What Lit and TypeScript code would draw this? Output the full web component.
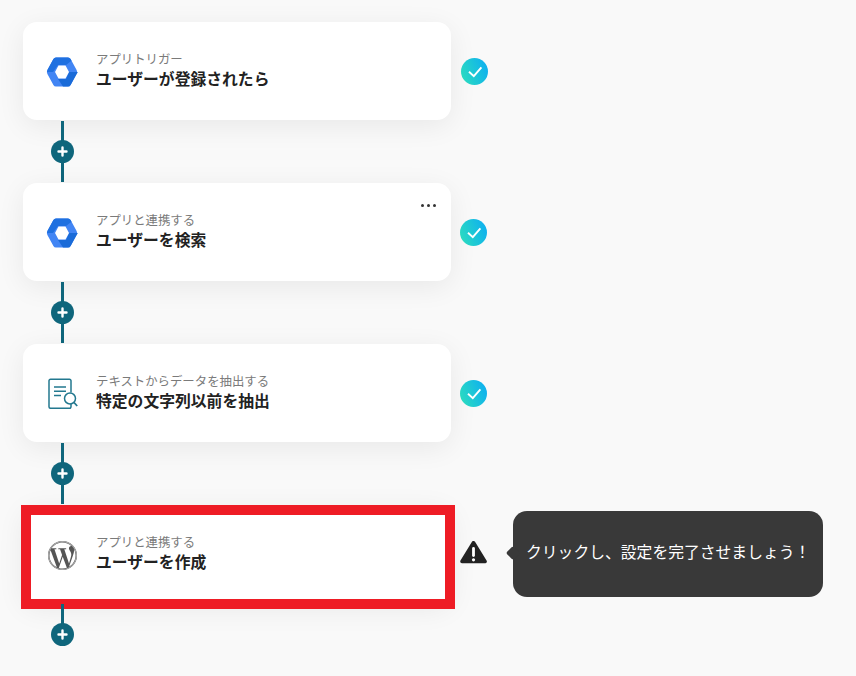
import { LitElement, html, css } from "lit";
import { customElement } from "lit/decorators.js";

const hex = html`<svg class="ico hex" viewBox="0 0 32 30" width="32" height="30">
  <path d="M10 .6h12a3 3 0 0 1 2.600 1.500l6 10.900a4 4 0 0 1 0 4l-6 10.900a3 3 0 0 1-2.600 1.500H10a3 3 0 0 1-2.600-1.500l-6-10.900a4 4 0 0 1 0-4l6-10.900A3 3 0 0 1 10 .6z" fill="#4285f4"/>
  <path d="M10 .6h12a3 3 0 0 1 2.600 1.500l.9 1.600L20 8h-8l-5 7H1l.4-2 6-10.900A3 3 0 0 1 10 .6z" fill="#1f70e0"/>
  <path d="M20 22l3-7 8.800 0a4 4 0 0 1-1.200 2l-6 10.900a3 3 0 0 1-2.600 1.500h-5L12 22z" fill="#1a6bd8"/>
  <path d="M12.500 8.500h7L23 15l-3.500 6.500h-7L9 15z" fill="#fff"/>
</svg>`;

const doc = html`<svg class="ico" viewBox="0 0 32 32" width="32" height="32" fill="none" stroke="#23788f" stroke-width="1.500">
  <path d="M25 15.500V3.800a1.500 1.500 0 0 0-1.500-1.500h-19A1.500 1.500 0 0 0 3 3.800v26a1.500 1.500 0 0 0 1.500 1.500h19a1.500 1.500 0 0 0 1.500-1.500v-2.800"/>
  <path d="M8 10h12M8 14.200h12M8 18.500h7"/>
  <circle cx="24" cy="21.500" r="5.500" fill="#fff"/>
  <path d="M28 25.500l3.200 3.500" stroke-width="1.800"/>
</svg>`;

const wp = html`<svg class="ico wp" viewBox="0 0 24 24" width="29" height="29">
  <path fill="#555" d="M21.469 6.825c.84 1.537 1.318 3.3 1.318 5.175 0 3.979-2.156 7.456-5.363 9.325l3.295-9.527c.615-1.54.82-2.771.82-3.864 0-.405-.026-.78-.07-1.11m-7.981.105c.647-.03 1.232-.105 1.232-.105.582-.075.514-.93-.067-.899 0 0-1.755.135-2.88.135-1.064 0-2.85-.15-2.85-.15-.585-.03-.661.855-.075.885 0 0 .54.061 1.125.09l1.68 4.605-2.37 7.08L5.354 6.9c.649-.03 1.234-.1 1.234-.1.585-.075.516-.93-.065-.896 0 0-1.746.138-2.874.138-.2 0-.438-.008-.69-.015C4.911 3.15 8.235 1.215 12 1.215c2.809 0 5.365 1.072 7.286 2.833-.046-.003-.091-.009-.141-.009-1.06 0-1.812.923-1.812 1.914 0 .89.513 1.643 1.06 2.531.411.72.89 1.643.89 2.977 0 .915-.354 1.994-.821 3.479l-1.075 3.585-3.9-11.61.001.014zM12 22.784c-1.059 0-2.081-.153-3.048-.437l3.237-9.406 3.315 9.087c.024.053.05.101.078.149-1.12.393-2.325.609-3.582.609M1.211 12c0-1.564.336-3.05.935-4.39L7.29 21.709C3.694 19.96 1.212 16.271 1.211 12M12 0C5.385 0 0 5.385 0 12s5.385 12 12 12 12-5.385 12-12S18.615 0 12 0"/>
  <circle cx="12" cy="12" r="11.500" fill="none" stroke="#a8a8a8" stroke-width="1"/>
</svg>`;

const check = html`<svg viewBox="0 0 27 27" width="27" height="27">
  <defs><linearGradient id="g" x1="0" y1=".7" x2="1" y2=".3"><stop offset="0" stop-color="#2bdbc0"/><stop offset="1" stop-color="#0eb0f0"/></linearGradient></defs>
  <circle cx="13.500" cy="13.500" r="13.500" fill="url(#g)"/>
  <path d="M8 13.800l4.800 4.400 7.600-8.800" fill="none" stroke="#fff" stroke-width="1.900"/>
</svg>`;

const warn = html`<svg viewBox="0 1 27 24" width="27" height="24">
  <path d="M13.500 2.800L25 21.500H2z" fill="#222" stroke="#222" stroke-width="3.600" stroke-linejoin="round"/>
  <path d="M13.500 8.500v7" stroke="#fff" stroke-width="2.800" stroke-linecap="round"/>
  <circle cx="13.500" cy="19.800" r="1.600" fill="#fff"/>
</svg>`;

const steps = [
  { icon: hex, label: "アプリトリガー", title: "ユーザーが登録されたら", st: "first" },
  { icon: hex, label: "アプリと連携する", title: "ユーザーを検索", st: "ok", menu: true },
  { icon: doc, label: "テキストからデータを抽出する", title: "特定の文字列以前を抽出", st: "ok" },
  { icon: wp, label: "アプリと連携する", title: "ユーザーを作成", st: "warn" },
];

@customElement("app-root")
export class AppRoot extends LitElement {
  static styles = css`
    :host {
      display: block;
      width: 856px;
      height: 676px;
      overflow: hidden;
      background: #f9f9f9;
      font-family: "Noto Sans CJK JP", "Noto Sans", sans-serif;
    }
    .flow { display: flex; flex-direction: column; padding: 22px 0 0 23px; }
    .row { display: flex; align-items: center; }
    .card {
      position: relative;
      box-sizing: border-box;
      width: 428px;
      height: 98px;
      background: #fff;
      border-radius: 14px;
      box-shadow: 0 6px 28px rgba(0, 0, 0, 0.07);
      display: flex;
      align-items: center;
      padding-left: 23px;
      gap: 18px;
    }
    .slot { width: 32px; height: 32px; display: flex; align-items: center; justify-content: center; flex: none; }
    .ico { display: block; flex: none; }
    .hex, .wp { margin-top: 2px; }
    .text { display: flex; flex-direction: column; margin-top: -2px; }
    .label { font-size: 12.4px; line-height: 18px; color: #7a7a7a; white-space: nowrap; }
    .title { font-size: 15.8px; line-height: 22px; font-weight: 700; color: #222; white-space: nowrap; }
    .menu { position: absolute; top: 21px; right: 15px; display: flex; gap: 3px; }
    .menu i { width: 3px; height: 3px; border-radius: 50%; background: #333; }
    .frame {
      position: absolute;
      left: -2px; right: -4px; top: 0; bottom: -6px;
      border: 10px solid #ee1c25;
      pointer-events: none;
    }
    .status { margin-left: 9px; width: 27px; height: 27px; position: relative; }
    .status.first { margin-left: 10px; }
    .status svg { display: block; }
    .tip {
      position: absolute;
      left: 53px;
      top: -30px;
      box-sizing: border-box;
      width: 310px;
      height: 86px;
      background: #393939;
      color: #fff;
      border-radius: 14px;
      font-size: 15.8px;
      display: flex;
      align-items: center;
      padding: 0 0 4px 13px;
      white-space: nowrap;
    }
    .tip::before {
      content: "";
      position: absolute;
      left: -5px;
      top: 37px;
      width: 10px;
      height: 10px;
      background: #393939;
      transform: rotate(45deg);
      border-radius: 2px;
    }
    .link { position: relative; width: 3px; height: 61px; margin: 1px 0 1px 38px; background: #0f667c; }
    .link.last { height: 30px; margin-bottom: 0; }
    .plus {
      position: absolute;
      left: -10px;
      top: 19px;
      width: 23px;
      height: 23px;
      border-radius: 50%;
      background: #0f667c;
      display: flex;
      align-items: center;
      justify-content: center;
    }
  `;

  render() {
    return html`<div class="flow">
      ${steps.map(
        (s, i) => html`
          <div class="row">
            <div class="card">
              <div class="slot">${s.icon}</div>
              <div class="text">
                <div class="label">${s.label}</div>
                <div class="title">${s.title}</div>
              </div>
              ${s.menu ? html`<div class="menu"><i></i><i></i><i></i></div>` : ""}
              ${s.st === "warn" ? html`<div class="frame"></div>` : ""}
            </div>
            <div class="status ${s.st === "first" ? "first" : ""}">
              ${s.st === "warn"
                ? html`${warn}<div class="tip">クリックし、設定を完了させましょう！</div>`
                : check}
            </div>
          </div>
          <div class="link ${i === steps.length - 1 ? "last" : ""}">
            <div class="plus">
              <svg viewBox="0 0 11 11" width="11" height="11">
                <path d="M5.500 1.500v8M1.500 5.500h8" stroke="#fff" stroke-width="2.400" stroke-linecap="round"/>
              </svg>
            </div>
          </div>
        `
      )}
    </div>`;
  }
}
